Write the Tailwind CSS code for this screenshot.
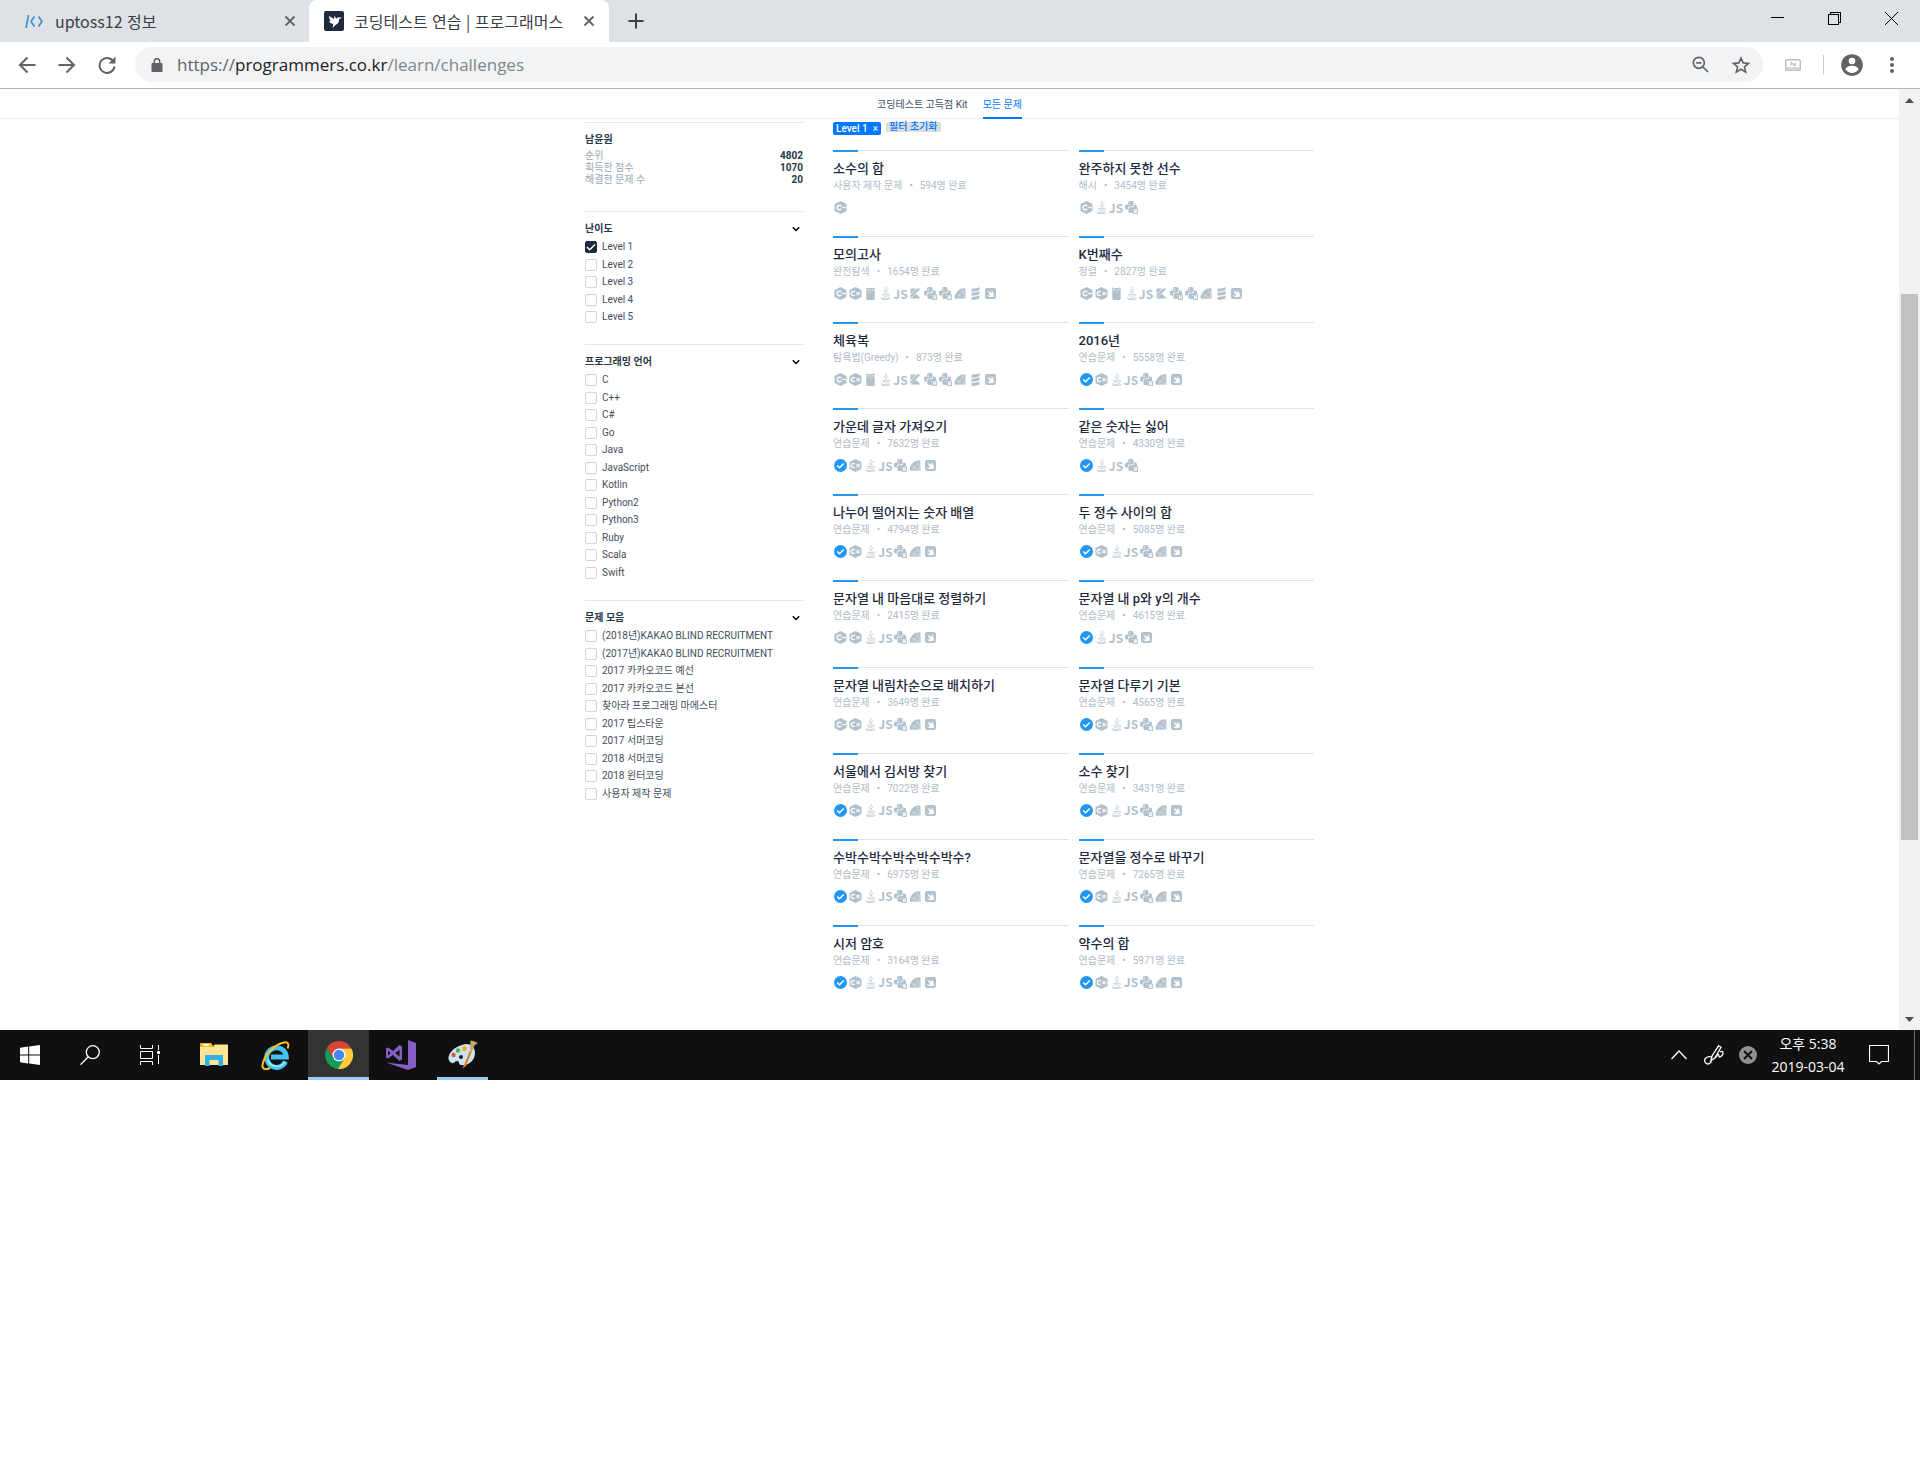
<!DOCTYPE html>
<html lang="ko">
<head>
<meta charset="utf-8">
<title>코딩테스트 연습 | 프로그래머스</title>
<script src="https://cdn.jsdelivr.net/npm/@tailwindcss/browser@4"></script>
</head>
<body class="min-h-screen bg-white font-['Roboto','Noto_Sans_CJK_KR',sans-serif] text-[10px] leading-3 text-[#3f4e5e]">

<svg class="hidden" aria-hidden="true">
  <symbol id="cpp" viewBox="0 0 13 13"><path fill="#b2c0cc" d="M6.5 0 12.500 3v7L6.500 13 .5 10V3z"/><path d="M7.200 4.900A2.300 2.300 0 1 0 7.200 8.100" fill="none" stroke="#fff" stroke-width="1.400"/><path d="M7.600 6.500h4.600M8.600 5.600v1.800M11 5.600v1.800" stroke="#fff" stroke-width=".7"/></symbol>
  <symbol id="cs" viewBox="0 0 13 13"><path fill="#b2c0cc" d="M6.500 0 12.500 3v7L6.500 13 .5 10V3z"/><path d="M5.800 5.100A2 2 0 1 0 5.800 7.900" fill="none" stroke="#fff" stroke-width="1.300"/><path d="M8.300 4.800v3.600M9.900 4.800v3.600M7.200 5.800h3.900M7.200 7.300h3.900" stroke="#fff" stroke-width=".7"/></symbol>
  <symbol id="go" viewBox="0 0 13 13"><path fill="#b2c0cc" d="M2 1.300 3.200.4 4.500 1h4L9.800.4l1.200.9-.6 1.500.3 3v5.700l-.8 1.500H3.100l-.8-1.500V5.800l.3-3z"/><circle cx="4.700" cy="2.800" r="1.100" fill="#fff"/><circle cx="8.300" cy="2.800" r="1.100" fill="#fff"/><circle cx="5" cy="2.900" r=".6" fill="#8d9dab"/><circle cx="8" cy="2.900" r=".6" fill="#8d9dab"/><path d="M6 4.400h1v1H6z" fill="#fff"/></symbol>
  <symbol id="java" viewBox="0 0 13 13"><g fill="none" stroke="#b9c6d1" stroke-linecap="round"><path d="M7.200.3c1.100 2-2.900 2.700-1.400 4.500l.9 1.400M9 2.800c-1.800.8-2.200 1.400-1.300 2.700" stroke-width=".9"/><path d="M3.500 7.200c1.500.6 4 .6 5.500.1M4 8.900c1.500.5 3 .5 4.300.1M9.700 7c1.800 0 1.300 1.800-.3 2.200M2.600 10.500c-3 1 4.500 1.700 7.300.2M3.300 12.500c3 .4 6.600 0 7.900-.9" stroke-width=".8"/></g></symbol>
  <symbol id="kt" viewBox="0 0 13 13"><path fill="#b2c0cc" d="M1.500 1.500H7L1.500 7.500zM7.900 1.500h3.600L6.700 6.500l4.800 5h-10V8.300z"/><path d="M1.500 11.500 6.600 6.500" stroke="#fff" stroke-width=".6"/></symbol>
  <symbol id="py" viewBox="0 0 13 13"><path fill="#b2c0cc" d="M3 1.600C3 .3 4.200 0 5.700 0s2.800.4 2.800 1.600v2.500c0 .9-.6 1.400-1.400 1.400H4.500c-1.200 0-1.600.7-1.600 1.500v1.600H1.700C.5 8.600 0 7.400 0 5.900s.5-2.500 1.700-2.500h4V3H3z"/><path fill="#b2c0cc" d="M9.100 3.400h1.200c1.200 0 1.700 1 1.700 2.500 0 2-.5 2.700-1.700 2.700H6.600V9h2.600v1.400c0 1.200-1.200 1.600-2.900 1.600-1.700 0-2.900-.5-2.900-1.600V7.900c0-.9.600-1.700 1.500-1.700h2.600c1 0 1.600-.7 1.600-1.400z"/><circle cx="4.500" cy="1.500" r=".5" fill="#fff"/><rect x="8.500" y="8" width="4" height="4.500" fill="#fff" stroke="#b2c0cc" stroke-width=".9"/></symbol>
  <symbol id="py2" viewBox="0 0 13 13"><use href="#py"/><path d="M9.500 9.300h1.800l-1.600 2h1.800" fill="none" stroke="#b2c0cc" stroke-width=".6"/></symbol>
  <symbol id="py3" viewBox="0 0 13 13"><use href="#py"/><path d="M9.500 9.300h1.700v2H9.500" fill="none" stroke="#b2c0cc" stroke-width=".4"/></symbol>
  <symbol id="rb" viewBox="0 0 13 13"><path fill="#b2c0cc" d="M6.700 1.800 11.300 1.300l.4 10.200-9.900.2C.3 11.200.3 9.200 1.300 7.400 2.800 4.900 4.600 2.800 6.700 1.800z"/><path d="M2.400 7.300 5 8.500 9.300 4.300 7.500 2.500M5 8.500l-.8 2.600M5 8.500l6 2.300M9.300 4.300l1.900 6" fill="none" stroke="#fff" stroke-width=".4"/></symbol>
  <symbol id="sc" viewBox="0 0 13 13"><g fill="#b2c0cc"><path d="M2.500 1.700c3 0 6.500-.6 8-1.700v3c-1.500 1.100-5 1.700-8 1.700zM2.500 5.800c3 0 6.500-.6 8-1.700v3c-1.500 1.100-5 1.700-8 1.700zM2.500 10c3 0 6.500-.6 8-1.700v3c-1.500 1.100-5 1.700-8 1.700z"/></g></symbol>
  <symbol id="sw" viewBox="0 0 13 13"><rect x="1" y="1" width="11" height="11" rx="2.200" fill="#b2c0cc"/><path fill="#fff" d="M3.200 3.300C4.600 4.800 5.600 5.600 6.300 6L4.500 3.500c1.500 1.400 2.600 2.200 3.200 2.600.2-.9 0-2-.6-2.900 2 1.200 3 3.200 2.600 5 .6.800.7 1.500.5 2-.5-.7-1.100-.7-1.600-.4-2.100 1-4.500.2-5.900-1.900 1.400.9 2.600 1 3.700.4C5.200 7.200 4 5.500 3.200 3.300z"/></symbol>
  <symbol id="ok" viewBox="0 0 13 13"><circle cx="6.500" cy="6.500" r="6.500" fill="#2196f3"/><path d="m3.200 6.500 2.300 2.300 4.300-4.300" fill="none" stroke="#fff" stroke-width="1.500"/></symbol>
  <symbol id="x" viewBox="0 0 12 12"><path d="m1.500 1.500 9 9m0-9-9 9" stroke="#5f6368" stroke-width="1.800"/></symbol>
  <symbol id="down" viewBox="0 0 8 8"><path d="m.8 2.300 3.200 3.200 3.200-3.200" fill="none" stroke="#000" stroke-width="1.500"/></symbol>
</svg>

<!-- Browser window -->
<header class="font-['Open_Sans','Noto_Sans_CJK_KR',sans-serif]">
  <div class="flex h-[42px] items-stretch bg-[#dee1e6] font-['Noto_Sans_CJK_KR',sans-serif] text-base leading-5 text-[#3c4043]">
    <div class="flex w-[309px] items-center pr-[13px] pl-6">
      <svg class="h-5 w-5" viewBox="0 0 20 20" fill="none" stroke="#3d94d1" stroke-width="1.700"><path d="M4.500 4 2 17M10.500 5.500 7 10.500l3.500 5M14.500 5.500l3.500 5-3.500 5"/></svg>
      <a href="#" class="ml-[11px] grow whitespace-nowrap">uptoss12 정보</a>
      <button aria-label="탭 닫기"><svg class="h-3 w-3"><use href="#x"/></svg></button>
    </div>
    <div class="flex w-[300px] items-center rounded-t-lg bg-white pr-[14px] pl-[15px]">
      <svg class="h-5 w-5 shrink-0" viewBox="0 0 20 20"><rect width="20" height="20" rx="2" fill="#1e2a3e"/><path fill="#fff" d="m5 5 5 3 .5-3.500 1.500 3 2.500-1.300 3.500.5-3 1.500c.3 3-1.200 4.800-3 5.300L8.500 17l.7-4C7 12.500 5.300 11.500 5 10l2 .2C5.800 9 5 7 5 5z"/></svg>
      <a href="#" class="ml-[10px] grow whitespace-nowrap">코딩테스트 연습 | 프로그래머스</a>
      <button aria-label="탭 닫기"><svg class="h-3 w-3"><use href="#x"/></svg></button>
    </div>
    <button class="ml-[19px]" aria-label="새 탭"><svg class="h-4 w-4" viewBox="0 0 16 16"><path d="M8 .5v15M.5 8h15" stroke="#3c4043" stroke-width="2"/></svg></button>
    <div class="ml-auto flex gap-[44px] pt-3 pr-[22px]">
      <button class="h-[13px] w-[13px]" aria-label="최소화"><svg viewBox="0 0 13 13" shape-rendering="crispEdges"><path d="M0 5.500h13" stroke="#000"/></svg></button>
      <button class="h-[13px] w-[13px]" aria-label="이전 크기로"><svg viewBox="0 0 13 13" fill="none" stroke="#000" shape-rendering="crispEdges"><path d="M.5 2.500h10v10H.5zM2.500 2.500v-2h10v10h-2"/></svg></button>
      <button class="h-[13px] w-[13px]" aria-label="닫기"><svg viewBox="0 0 13 13"><path d="m0 0 13 13M13 0 0 13" stroke="#000"/></svg></button>
    </div>
  </div>
  <div class="flex h-[47px] items-center border-b border-[#b2b4b6] pb-px pl-[18px] pr-[26px]">
    <div class="flex gap-[22px]">
      <button aria-label="뒤로"><svg class="h-[18px] w-[18px]" viewBox="0 0 18 18" fill="none" stroke="#5f6368" stroke-width="2"><path d="M17.500 9H2M9.500 1.500 2 9l7.500 7.500"/></svg></button>
      <button aria-label="앞으로"><svg class="h-[18px] w-[18px]" viewBox="0 0 18 18" fill="none" stroke="#5f6368" stroke-width="2"><path d="M.5 9H16M8.500 1.500 16 9l-7.500 7.500"/></svg></button>
      <button aria-label="새로고침"><svg class="h-[18px] w-[18px]" viewBox="0 0 18 18"><path d="M15.500 5.500A7.500 7.500 0 1 0 16.500 10.500" fill="none" stroke="#5f6368" stroke-width="2"/><path d="M17.500.5v7h-7z" fill="#5f6368"/></svg></button>
    </div>
    <div class="ml-[19px] flex h-[35px] grow items-center rounded-full bg-[#f1f3f4] pr-[13px] pl-4">
      <svg class="h-[14px] w-3" viewBox="0 0 12 14"><path fill="#5f6368" d="M1.500 5h9q1 0 1 1v7q0 1-1 1h-9q-1 0-1-1V6q0-1 1-1z"/><path d="M3.300 6V3.500a2.700 2.700 0 0 1 5.400 0V6" fill="none" stroke="#5f6368" stroke-width="1.500"/></svg>
      <div role="textbox" aria-label="주소" contenteditable="true" class="ml-[14px] grow text-[17px] leading-6 whitespace-nowrap text-[#80868b]"><span class="text-[#5f6368]">https://</span><span class="text-[#202124]">programmers.co.kr</span>/learn/challenges</div>
      <button aria-label="확대/축소"><svg class="h-[17px] w-[17px]" viewBox="0 0 17 17" fill="none" stroke="#5f6368" stroke-width="1.700"><circle cx="6.800" cy="6.800" r="5.500"/><path d="m11 11 5 5M4.200 6.800h5.200"/></svg></button>
      <button class="ml-[23px]" aria-label="북마크"><svg class="h-[18px] w-[18px]" viewBox="0 0 18 18"><path d="m9 2 2.100 4.900 5.400.5-4.100 3.500 1.300 5.200L9 13.300l-4.700 2.800 1.300-5.200-4.100-3.500 5.400-.5z" fill="none" stroke="#5f6368" stroke-width="1.600"/></svg></button>
    </div>
    <button class="ml-[22px]" aria-label="확장 프로그램"><svg class="h-3 w-4" viewBox="0 0 16 12" fill="none" stroke="#bdbdbd"><rect x=".7" y=".7" width="14.600" height="10.600" rx="1" stroke-width="1.400"/><path d="M1 9.200h14M6 6.500v-3l4 3v-3" stroke-width="1.200"/></svg></button>
    <div class="ml-[22px] h-5 w-px bg-[#c8cacd]"></div>
    <button class="ml-[17px]" aria-label="프로필"><svg class="h-[22px] w-[22px]" viewBox="0 0 22 22"><circle cx="11" cy="11" r="10.800" fill="#5f6368"/><circle cx="11" cy="7" r="3.300" fill="#fff"/><path d="M4.500 15.500c1-5 12-5 13 0-3 4.500-10 4.500-13 0z" fill="#fff"/></svg></button>
    <button class="ml-[27px]" aria-label="메뉴"><svg class="h-4 w-1" viewBox="0 0 4 16" fill="#5f6368"><circle cx="2" cy="2" r="2"/><circle cx="2" cy="8" r="2"/><circle cx="2" cy="14" r="2"/></svg></button>
  </div>
</header>

<div class="flex">
  <div class="min-w-0 grow">
    <nav class="flex h-[30px] justify-center gap-[15px] border-b border-[#e9ecf3] leading-8">
      <a href="#">코딩테스트 고득점 Kit</a>
      <a href="#" class="-mb-px border-b-2 border-[#0078ff] text-[#0078ff]">모든 문제</a>
    </nav>
    <div class="mx-auto flex max-w-[729px] gap-[30px] pt-[3px] pb-[19px]">
      <aside class="w-[218px] shrink-0">
        <section class="border-t border-[#dfe6ee] pt-[7px] pb-[25px] text-[#263747]">
          <h2 class="font-bold leading-5">남윤원</h2>
          <dl class="grid grid-cols-[1fr_auto] text-right font-bold">
            <dt class="text-left font-normal text-[#98a8b9]">순위</dt><dd>4802</dd>
            <dt class="text-left font-normal text-[#98a8b9]">획득한 점수</dt><dd>1070</dd>
            <dt class="text-left font-normal text-[#98a8b9]">해결한 문제 수</dt><dd>20</dd>
          </dl>
        </section>
        <div id="filters"></div>
      </aside>
      <main class="min-w-0 grow">
        <div class="flex h-[28px] items-start gap-[5px]">
          <button class="flex h-[13px] items-center gap-[5px] rounded-xs bg-[#0078ff] px-[3px] font-medium text-white">Level 1 <span class="font-normal">×</span></button>
          <button class="flex h-[10px] items-center rounded-xs bg-[#dddddd] px-[3px] font-medium text-[#0078ff]">필터 초기화</button>
        </div>
        <ul id="cards" class="grid h-[861px] auto-rows-fr grid-cols-2 gap-x-[10px]"></ul>
      </main>
    </div>
  </div>
  <div class="flex w-[21px] shrink-0 flex-col items-center bg-[#f1f1f1]">
    <button class="h-[23px]" aria-label="위로"><svg class="h-[5px] w-[9px]" viewBox="0 0 9 5"><path fill="#505050" d="M4.500 0 9 5H0z"/></svg></button>
    <div class="flex-[182]"></div>
    <div class="w-[17px] flex-[546] bg-[#c1c1c1]"></div>
    <div class="flex-[169]"></div>
    <button class="h-[21px]" aria-label="아래로"><svg class="h-[5px] w-[9px]" viewBox="0 0 9 5"><path fill="#505050" d="M0 0h9L4.500 5z"/></svg></button>
  </div>
</div>

<!-- Windows taskbar -->
<footer class="flex h-[50px] items-center bg-[#101010] pl-5 font-['Open_Sans','Noto_Sans_CJK_KR',sans-serif] text-white">
  <button aria-label="시작"><svg class="h-5 w-5" viewBox="0 0 20 20" fill="#fff"><path d="M0 2.800 8.200 1.600v8H0zM9.200 1.400 20 0v9.600H9.200zM0 10.500h8.200v8L0 17.300zM9.200 10.500H20V20L9.200 18.600z"/></svg></button>
  <button class="ml-10" aria-label="검색"><svg class="h-5 w-5" viewBox="0 0 20 20" fill="none" stroke="#fff" stroke-width="1.300"><circle cx="12.800" cy="7.200" r="6.500"/><path d="m8.300 11.800L.5 19.700"/></svg></button>
  <button class="ml-10" aria-label="작업 보기"><svg class="h-5 w-5" viewBox="0 0 20 20" fill="none" stroke="#fff"><path d="M.5 0v3.500h12V0M.5 20v-3.500h12V20M.5 6.500h12v7H.5zM18.500 0v5M18.500 10v9"/><path fill="#fff" d="M17.500 6.500h2v2h-2z"/></svg></button>
  <button class="ml-10" aria-label="파일 탐색기"><svg class="h-6 w-7" viewBox="0 0 28 24"><path fill="#f6b91b" d="M0 1q0-1 1-1h10l2 2.500V5H0z"/><path fill="#ffe594" d="M0 4h13l1.500-2.500H28v20.500H0z"/><path fill="#fff" d="M3 1.200h6v1.600H3z"/><path fill="#32b1e6" d="M5 12h18v11h-4.500v-6h-9v6H5z"/></svg></button>
  <button class="ml-[33px]" aria-label="Internet Explorer"><svg class="h-[29px] w-[29px]" viewBox="0 0 29 29"><path d="M24.500 20.500A9.800 9.800 0 1 1 25.300 16H10" fill="none" stroke="#45c3f3" stroke-width="5"/><path d="M24 20.500A9.500 9.500 0 0 1 6.500 18" fill="none" stroke="#a0ecff" stroke-width="1.500"/><path d="M9 27c-4 2-8 1.500-7.500-3C2.500 15 14 3 23 1.500c5-1 5 3 3.500 6" fill="none" stroke="#f7c51e" stroke-width="2"/></svg></button>
  <button class="ml-[18px] flex h-full w-[61px] items-center justify-center border-b-[3px] border-[#9dc9f7] bg-[#333333]" aria-label="Chrome"><svg class="mt-[3px] h-7 w-7" viewBox="0 0 28 28"><path fill="#db4437" d="M14 7.500h12.400A14 14 0 0 0 1.900 7L8 17.500z"/><path fill="#0f9d58" d="M1.900 7A14 14 0 0 0 13 28l6.200-10.500L14 20.500l-6-3z"/><path fill="#ffcd40" d="M26.400 7.500A14 14 0 0 1 13 28l6.500-11L14 7.500z"/><circle cx="14" cy="14" r="6.500" fill="#fff"/><circle cx="14" cy="14" r="5.200" fill="#4285f4"/></svg></button>
  <button class="ml-[17px]" aria-label="Visual Studio"><svg class="h-[30px] w-[30px]" viewBox="0 0 30 30" fill="#865fc5"><path d="m22 0 8 3v24l-8 3-22-7.500 22 2.500z"/><path fill-rule="evenodd" d="M0 8.500 2 7.500l5 3.500L13.500 5 16 6.500v13L13.500 21 7 15l-5 3.500-2-1zm2 2.500v4.500L4.800 13zm11.500-1L9.200 13l4.300 3.500z"/></svg></button>
  <button class="ml-[21px] flex h-full w-[51px] items-center justify-center border-b-[3px] border-[#9dc9f7]" aria-label="그림판"><svg class="h-[30px] w-[30px]" viewBox="0 0 30 30"><path fill="#c9e4f5" d="M14 6c7-3 13 1 13 8 0 8-7 13-14 12-3-.5-1-4-4-4-2 0-3 3-5 2-4-2-5-6-1-11 3-4 7-6 11-7z"/><circle cx="5.500" cy="16" r="2.200" fill="#e15243"/><circle cx="10" cy="11.500" r="2.200" fill="#55b046"/><circle cx="16.500" cy="9.500" r="2.500" fill="#f3ae28"/><circle cx="13" cy="18" r="2" fill="#15212c"/><path fill="#e5822e" d="M22 11.500 24 12.500 18 27l-3.500 2.500z"/><path fill="#c9a26c" d="m22.500 1.500 3 .5 4.500 2-3.500 2.500-2.500 5.500-2-1z"/></svg></button>
  <div class="ml-auto flex h-full items-center">
    <button aria-label="숨겨진 아이콘"><svg class="h-4 w-4" viewBox="0 0 16 16"><path d="m.5 12 7.500-8 7.500 8" fill="none" stroke="#fff" stroke-width="1.300"/></svg></button>
    <button class="ml-[17px]" aria-label="펜"><svg class="h-5 w-5" viewBox="0 0 20 20" fill="none" stroke="#fff" stroke-width="1.300"><path d="M7 15.500 8 11 14.500.8l2.500 1.500-6 10.500zM7.500 12c-5-1.500-8 2.500-6.500 5 2 4 7 1 6-1.500M11 13c2-2 2.500-4 3.500-3.500s-.5 2.500 1 2.500 3.500-2 3.500-4-1.500-2-3-1"/></svg></button>
    <button class="ml-[15px]" aria-label="연결 안 됨"><svg class="h-[18px] w-[18px]" viewBox="0 0 18 18"><circle cx="9" cy="9" r="9" fill="#8f8f8f"/><path d="m5 5 8 8m0-8-8 8" stroke="#101010" stroke-width="2"/></svg></button>
    <div class="ml-[13px] w-[76px] text-center text-[14px] leading-[23px] whitespace-nowrap"><div>오후 5:38</div><div>2019-03-04</div></div>
    <button class="ml-[23px]" aria-label="알림"><svg class="h-5 w-5" viewBox="0 0 20 20"><path d="M.5.500h19v16h-7l-2.500 2.500-2.500-2.500h-7z" fill="none" stroke="#fff" stroke-width="1.200"/></svg></button>
    <div class="mr-[5px] ml-[25px] h-full w-px bg-[#6a6a6a]"></div>
  </div>
</footer>

<script>
const filters = [
  ['난이도', 'h-[82px]', ['Level 1', 'Level 2', 'Level 3', 'Level 4', 'Level 5']],
  ['프로그래밍 언어', 'h-[205px]', ['C', 'C++', 'C#', 'Go', 'Java', 'JavaScript', 'Kotlin', 'Python2', 'Python3', 'Ruby', 'Scala', 'Swift']],
  ['문제 모음', 'h-[170px]', ['(2018년)KAKAO BLIND RECRUITMENT', '(2017년)KAKAO BLIND RECRUITMENT', '2017 카카오코드 예선', '2017 카카오코드 본선', '찾아라 프로그래밍 마에스터', '2017 팁스타운', '2017 서머코딩', '2018 서머코딩', '2018 윈터코딩', '사용자 제작 문제']]
];
document.getElementById('filters').innerHTML = filters.map(([name, height, items], g) => `
  <section class="border-t border-[#dfe6ee] pt-[7px] pb-[21px]">
    <div class="mb-[2px] flex h-5 items-center justify-between">
      <h2 class="font-bold text-[#263747]">${name}</h2>
      <button class="mr-[3px]" aria-label="${name} 접기"><svg class="h-2 w-2"><use href="#down"/></svg></button>
    </div>
    <ul class="flex ${height} flex-col justify-between">${items.map((t, i) => `
      <li class="flex h-3 items-center">
        <span class="relative h-3 w-3">
          <input type="checkbox" id="f${g}-${i}" class="peer block h-3 w-3 appearance-none rounded-xs border border-[#cbd6e1] bg-white checked:border-[#1e2a3e] checked:bg-[#1e2a3e]" ${t === 'Level 1' ? 'checked' : ''}>
          <svg class="pointer-events-none absolute inset-0 hidden h-3 w-3 peer-checked:block" viewBox="0 0 12 12"><path d="m2 6 2.700 2.700L10 3.500" fill="none" stroke="#fff" stroke-width="1.400"/></svg>
        </span>
        <label for="f${g}-${i}" class="pl-[5px] whitespace-nowrap">${t}</label>
      </li>`).join('')}
    </ul>
  </section>`).join('');

const all = 'cpp cs go java js kt py2 py3 rb sc sw';
const done = 'ok cs java js py3 rb sw';
const cards = [
  ['소수의 합', '사용자 제작 문제', 594, 'cpp'],
  ['완주하지 못한 선수', '해시', 3454, 'cpp java js py3'],
  ['모의고사', '완전탐색', 1654, all],
  ['K번째수', '정렬', 2827, all],
  ['체육복', '탐욕법(Greedy)', 873, all],
  ['2016년', '연습문제', 5558, done],
  ['가운데 글자 가져오기', '연습문제', 7632, done],
  ['같은 숫자는 싫어', '연습문제', 4330, 'ok java js py3'],
  ['나누어 떨어지는 숫자 배열', '연습문제', 4794, done],
  ['두 정수 사이의 합', '연습문제', 5085, done],
  ['문자열 내 마음대로 정렬하기', '연습문제', 2415, 'cpp cs java js py3 rb sw'],
  ['문자열 내 p와 y의 개수', '연습문제', 4615, 'ok java js py3 sw'],
  ['문자열 내림차순으로 배치하기', '연습문제', 3649, 'cpp cs java js py3 rb sw'],
  ['문자열 다루기 기본', '연습문제', 4565, done],
  ['서울에서 김서방 찾기', '연습문제', 7022, done],
  ['소수 찾기', '연습문제', 3431, done],
  ['수박수박수박수박수박수?', '연습문제', 6975, done],
  ['문자열을 정수로 바꾸기', '연습문제', 7265, done],
  ['시저 암호', '연습문제', 3164, done],
  ['약수의 합', '연습문제', 5971, done]
];
const icon = n => n === 'js'
  ? '<span class="flex h-[13px] w-[13px] items-center justify-center font-[\'Noto_Sans_CJK_KR\',sans-serif] text-xs font-bold text-[#b2c0cc]">JS</span>'
  : `<svg class="h-[13px] w-[13px]"><use href="#${n}"/></svg>`;
document.getElementById('cards').innerHTML = cards.map(([title, kind, n, icons]) => `
  <li class="min-w-0">
    <div class="h-[9px] border-t border-[#dfe3ea]"><div class="-mt-px h-[2px] w-[25px] bg-[#2196f3]"></div></div>
    <a href="#" class="block truncate text-[13px] leading-5 font-medium text-[#1e2a3e]">${title}</a>
    <p class="flex gap-[7px] leading-[14px] text-[#b0bcc9]"><span>${kind}</span><span>•</span><span>${n}명 완료</span></p>
    <div class="mt-2 flex gap-[2px] pl-px">${icons.split(' ').map(icon).join('')}</div>
  </li>`).join('');
</script>
</body>
</html>
